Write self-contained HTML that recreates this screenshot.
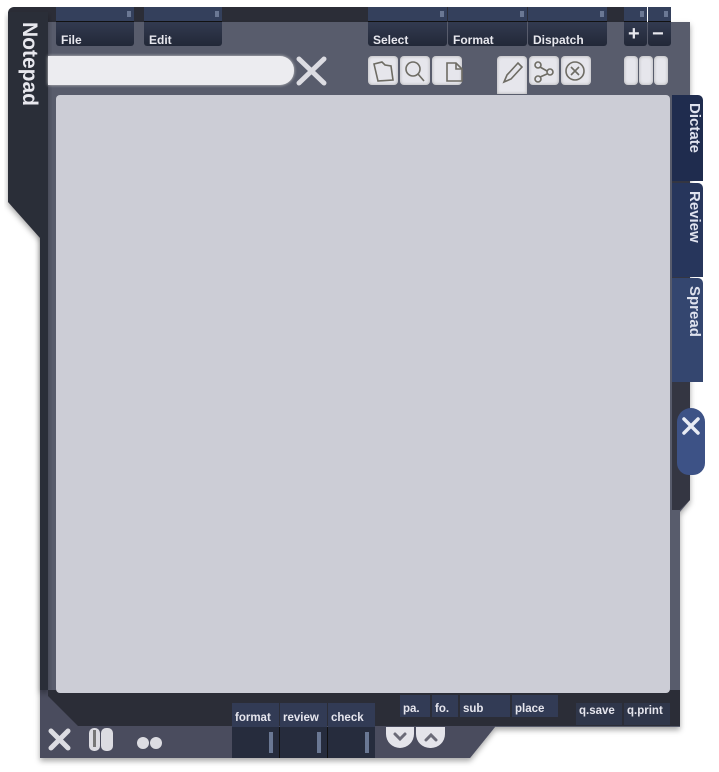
<!DOCTYPE html>
<html><head><meta charset="utf-8"><style>
*{margin:0;padding:0;box-sizing:border-box}
body{width:719px;height:772px;background:#fff;position:relative;overflow:hidden;font-family:"Liberation Sans",sans-serif}
.a{position:absolute}
.dark{background:#2b2d37}
.mb{position:absolute;color:#e8e8ee;font-weight:bold;font-size:12px}
.mt{background:#34405c;border-bottom:1px solid #111;position:relative}
.mt:after{content:"";position:absolute;right:3px;top:4px;width:4px;height:6px;background:#6b7894}
.ml{background:linear-gradient(#323a50,#222838);border-radius:0 0 3px 3px;padding:11px 0 0 5px}
.ib{position:absolute;background:#e6e6ec;border-radius:4px;box-shadow:inset 0 0 3px #aaa}
.tab{position:absolute;color:#dfe2ee;font-weight:bold;font-size:15px;writing-mode:vertical-rl;padding-top:8px;padding-left:5px}
.bb{position:absolute;color:#e6e6ee;font-weight:bold;font-size:11.5px;background:#323b55;padding:8px 0 0 3px}
</style></head><body>
<div class="a dark" style="left:8px;top:7px;width:620px;height:16px;border-radius:6px 0 0 0"></div>
<svg class="a" style="left:0;top:0" width="719" height="772">
<defs><filter id="s"><feDropShadow dx="0" dy="3" stdDeviation="3" flood-opacity=".35"/></filter></defs>
<polygon filter="url(#s)" points="40,22 690,22 690,500 680,512 680,727 495,727 470,758 40,758" fill="#595b6c"/>
<polygon points="40,690 495,690 495,727 470,758 40,758" fill="#4a4c5e"/>
<polygon filter="url(#s)" points="8,12 48,12 48,690 40,690 40,238 8,202" fill="#2b2d37"/>
<polygon points="48,690 680,690 680,726 78,726 48,696" fill="#2b2d37"/>
<polygon points="672,95 690,95 690,500 680,510 672,510" fill="#343642"/>
</svg>
<div class="a" style="left:17px;top:22px;color:#e8e8ee;font-weight:bold;font-size:21px;writing-mode:vertical-rl">Notepad</div>
<div class="a" style="left:56px;top:95px;width:614px;height:598px;background:#cccdd6;border-radius:4px"></div>
<div class="mb" style="left:56px;top:7px;width:78px"><div class="mt" style="height:15px"></div><div class="ml" style="height:24px">File</div></div>
<div class="mb" style="left:144px;top:7px;width:78px"><div class="mt" style="height:15px"></div><div class="ml" style="height:24px">Edit</div></div>
<div class="mb" style="left:368px;top:7px;width:79px"><div class="mt" style="height:15px"></div><div class="ml" style="height:24px">Select</div></div>
<div class="mb" style="left:448px;top:7px;width:79px"><div class="mt" style="height:15px"></div><div class="ml" style="height:24px">Format</div></div>
<div class="mb" style="left:528px;top:7px;width:79px"><div class="mt" style="height:15px"></div><div class="ml" style="height:24px">Dispatch</div></div>
<div class="mb" style="left:624px;top:7px;width:23px"><div class="mt" style="height:15px"></div><div class="ml" style="height:24px;font-size:20px;padding:0 0 0 4px;line-height:24px">+</div></div>
<div class="mb" style="left:648px;top:7px;width:23px"><div class="mt" style="height:15px"></div><div class="ml" style="height:24px;font-size:20px;padding:0 0 0 4px;line-height:24px">−</div></div>
<div class="a" style="left:48px;top:56px;width:246px;height:29px;background:#ececf0;border-radius:0 14px 14px 0;box-shadow:0 0 3px #ccc"></div>
<svg class="a" style="left:296px;top:56px" width="32" height="30"><path d="M3 3L28 27M28 3L3 27" stroke="#dcdce2" stroke-width="5" stroke-linecap="round"/></svg>
<div class="ib" style="left:368px;top:56px;width:30px;height:29px"></div>
<div class="ib" style="left:400px;top:56px;width:30px;height:29px"></div>
<div class="ib" style="left:432px;top:56px;width:30px;height:29px"></div>
<div class="ib" style="left:497px;top:56px;width:30px;height:38px;border-radius:4px 4px 0 0"></div>
<div class="ib" style="left:529px;top:56px;width:30px;height:29px"></div>
<div class="ib" style="left:561px;top:56px;width:30px;height:29px"></div>
<div class="ib" style="left:624px;top:56px;width:14px;height:29px"></div>
<div class="ib" style="left:639px;top:56px;width:14px;height:29px"></div>
<div class="ib" style="left:654px;top:56px;width:14px;height:29px"></div>
<svg class="a" style="left:368px;top:56px" width="230" height="30" fill="none" stroke="#6e6c64" stroke-width="1.6">
<path d="M6 8L14 6L17 9L23 10L25 24L10 25Z M6 8L10 25"/>
<circle cx="45" cy="13" r="7"/><path d="M50 18L56 25"/>
<path d="M79 7H88L94 13V25H79Z M88 7V13H94"/>
<path d="M136 26L139 19L150 7L154 11L143 23Z"/>
<circle cx="170" cy="9" r="3"/><circle cx="182" cy="16" r="3"/><circle cx="170" cy="23" r="3"/><path d="M172 11L179 15M179 18L172 21"/>
<circle cx="207" cy="15" r="9"/><path d="M203 11L211 19M211 11L203 19"/>
</svg>
<div class="tab" style="left:672px;top:95px;width:31px;height:86px;background:#1f2c4e;border-radius:0 5px 0 0">Dictate</div>
<div class="tab" style="left:672px;top:183px;width:31px;height:94px;background:#27365c;border-radius:0 5px 0 0">Review</div>
<div class="tab" style="left:672px;top:278px;width:31px;height:104px;background:#34466f;border-radius:0 5px 0 0">Spread</div>
<div class="a" style="left:677px;top:408px;width:28px;height:67px;background:#3d5286;border-radius:14px 14px 12px 12px"></div>
<svg class="a" style="left:680px;top:416px" width="22" height="20"><path d="M4 3L11 10L4 17M18 3L11 10L18 17" stroke="#e8ebf4" stroke-width="3.5" fill="none" stroke-linecap="round"/></svg>
<div class="bb" style="left:400px;top:695px;width:30px;height:22px">pa.</div>
<div class="bb" style="left:432px;top:695px;width:26px;height:22px">fo.</div>
<div class="bb" style="left:460px;top:695px;width:50px;height:22px">sub</div>
<div class="bb" style="left:512px;top:695px;width:46px;height:22px">place</div>
<div class="bb" style="left:576px;top:703px;width:46px;height:22px;padding-top:2px;background:#2f364a">q.save</div>
<div class="bb" style="left:624px;top:703px;width:46px;height:22px;padding-top:2px;background:#2f364a">q.print</div>
<div class="bb" style="left:232px;top:703px;width:47px;height:24px;padding-top:9px">format</div>
<div class="bb" style="left:280px;top:703px;width:47px;height:24px;padding-top:9px">review</div>
<div class="bb" style="left:328px;top:703px;width:47px;height:24px;padding-top:9px">check</div>
<div class="a" style="left:232px;top:727px;width:143px;height:31px;background:#262c3d"></div>
<div class="a" style="left:279px;top:727px;width:1px;height:31px;background:#111"></div>
<div class="a" style="left:327px;top:727px;width:1px;height:31px;background:#111"></div>
<div class="a" style="left:269px;top:732px;width:4px;height:21px;background:#6a7894"></div>
<div class="a" style="left:317px;top:732px;width:4px;height:21px;background:#6a7894"></div>
<div class="a" style="left:365px;top:732px;width:4px;height:21px;background:#6a7894"></div>
<div class="a" style="left:386px;top:727px;width:28px;height:21px;background:#e4e4ea;border-radius:0 0 14px 14px"></div>
<div class="a" style="left:416px;top:727px;width:29px;height:21px;background:#e4e4ea;border-radius:0 0 14px 14px"></div>
<svg class="a" style="left:386px;top:727px" width="60" height="22" fill="none" stroke="#6b6b78" stroke-width="3" stroke-linecap="round"><path d="M9 7L14 12L19 7M40 13L45 8L50 13"/></svg>
<svg class="a" style="left:46px;top:726px" width="125" height="28">
<path d="M5 5L22 22M22 5L5 22" stroke="#dcdce2" stroke-width="5" stroke-linecap="round"/>
<rect x="43" y="2" width="11" height="23" rx="5" fill="#dcdce2"/><rect x="55" y="2" width="12" height="23" rx="5" fill="#dcdce2"/>
<rect x="47" y="4" width="3" height="17" fill="#777"/>
<circle cx="97" cy="17" r="6" fill="#dcdce2"/><circle cx="110" cy="17" r="6" fill="#dcdce2"/>
</svg>
</body></html>
